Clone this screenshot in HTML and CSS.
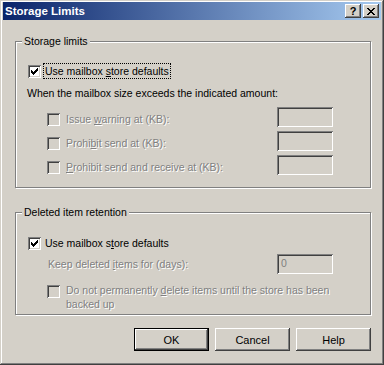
FILE: index.html
```html
<!DOCTYPE html>
<html lang="en">
<head>
    <meta charset="UTF-8">
    <title>Storage Limits</title>
    <link rel="stylesheet" href="styles.css">
</head>
<body>
    <div class="window">
        <div class="titlebar">
            <span class="title">Storage Limits</span>
            <div class="cap-buttons">
                <span class="cap-btn help">?</span>
                <span class="cap-btn">
                    <svg width="8" height="7" viewBox="0 0 8 7" shape-rendering="crispEdges"><path d="M0 0h2v1H0zM6 0h2v1H6zM1 1h2v1H1zM5 1h2v1H5zM2 2h4v1H2zM3 3h2v1H3zM2 4h4v1H2zM1 5h2v1H1zM5 5h2v1H5zM0 6h2v1H0zM6 6h2v1H6z"/></svg>
                </span>
            </div>
        </div>

        <div class="group group-limits">
            <span class="group-title">Storage limits</span>
            <div class="check-row">
                <span class="box">
                    <svg width="7" height="7" viewBox="0 0 7 7" shape-rendering="crispEdges"><path d="M6 0h1v1H6zM5 1h2v1H5zM0 2h1v1H0zM4 2h3v1H4zM0 3h2v1H0zM3 3h3v1H3zM0 4h5v1H0zM1 5h3v1H1zM2 6h1v1H2z"/></svg>
                </span>
                <span class="label focus">Use mailbox <u>s</u>tore defaults</span>
            </div>
            <p class="hint">When the mailbox size exceeds the indicated amount:</p>
            <div class="limit-row">
                <span class="box off"></span>
                <span class="label dim">Issue <u>w</u>arning at (KB):</span>
                <span class="edit"></span>
            </div>
            <div class="limit-row">
                <span class="box off"></span>
                <span class="label dim">Prohi<u>b</u>it send at (KB):</span>
                <span class="edit"></span>
            </div>
            <div class="limit-row">
                <span class="box off"></span>
                <span class="label dim"><u>P</u>rohibit send and receive at (KB):</span>
                <span class="edit"></span>
            </div>
        </div>

        <div class="group group-retention">
            <span class="group-title">Deleted item retention</span>
            <div class="check-row">
                <span class="box">
                    <svg width="7" height="7" viewBox="0 0 7 7" shape-rendering="crispEdges"><path d="M6 0h1v1H6zM5 1h2v1H5zM0 2h1v1H0zM4 2h3v1H4zM0 3h2v1H0zM3 3h3v1H3zM0 4h5v1H0zM1 5h3v1H1zM2 6h1v1H2z"/></svg>
                </span>
                <span class="label plain">Use mailbox s<u>t</u>ore defaults</span>
            </div>
            <div class="keep-row">
                <span class="dim">Keep deleted <u>i</u>tems for (days):</span>
                <span class="edit">0</span>
            </div>
            <div class="wrap-row">
                <span class="box off"></span>
                <span class="label dim">Do not permanently <u>d</u>elete items until the store has been backed up</span>
            </div>
        </div>

        <div class="buttons">
            <button class="btn default">OK</button>
            <button class="btn">Cancel</button>
            <button class="btn">Help</button>
        </div>
    </div>
</body>
</html>
```

FILE: styles.css
```css
/* classic dialog */

* {
    box-sizing: border-box;
}

body {
    margin: 0;
    font-family: "Liberation Sans", Arial, sans-serif;
    font-size: 10.5px;
    line-height: 13px;
    color: #000;
}

.window {
    width: 384px;
    height: 365px;
    padding: 2px 3px 3px;
    background: #d4d0c8;
    box-shadow: inset -1px -1px #404040, inset 1px 1px #d4d0c8,
                inset -2px -2px #808080, inset 2px 2px #fff;
}

.titlebar {
    height: 18px;
    display: flex;
    align-items: center;
    padding: 0 2px;
    background: linear-gradient(to right, #0a246a, #a6caf0);
    color: #fff;
}

.title {
    flex: 1;
    font-weight: bold;
    font-size: 11.5px;
}

.cap-buttons {
    display: flex;
    gap: 2px;
}

.cap-btn {
    width: 16px;
    height: 14px;
    display: flex;
    align-items: center;
    justify-content: center;
    background: #d4d0c8;
    color: #000;
    box-shadow: inset -1px -1px #404040, inset 1px 1px #fff,
                inset -2px -2px #808080, inset 2px 2px #d4d0c8;
}

.cap-btn.help {
    font-weight: bold;
    font-size: 11px;
}

/* group boxes */

.group {
    position: relative;
    width: 356px;
    margin-left: 12px;
    padding: 0 12px;
    border: 1px solid #808080;
    box-shadow: inset 1px 1px #fff, 1px 1px #fff;
}

.group-limits {
    margin-top: 21px;
    padding-bottom: 8px;
}

.group-retention {
    margin-top: 24px;
    padding-bottom: 3px;
}

.group-title {
    position: absolute;
    top: -7px;
    left: 6px;
    padding: 0 2px;
    background: #d4d0c8;
}

.check-row {
    display: flex;
    align-items: center;
    height: 16px;
}

.group-limits .check-row {
    margin-top: 21px;
}

.group-retention .check-row {
    margin-top: 22px;
}

.box {
    flex: none;
    width: 13px;
    height: 13px;
    padding: 3px;
    background: #fff;
    box-shadow: inset 1px 1px #808080, inset -1px -1px #fff,
                inset 2px 2px #404040, inset -2px -2px #d4d0c8;
}

.box svg {
    display: block;
}

.box.off {
    background: #d4d0c8;
}

.label.focus {
    margin-left: 2px;
    padding: 0 1px;
    line-height: 14px;
    border: 1px dotted #000;
}

.label.plain {
    margin-left: 4px;
}

.dim {
    color: #808080;
    text-shadow: 1px 1px 0 #fff;
}

.hint {
    margin: 8px 0 0 -1px;
}

.limit-row {
    display: flex;
    align-items: center;
    height: 24px;
    padding-left: 19px;
}

.hint + .limit-row {
    margin-top: 7px;
}

.limit-row .label {
    margin-left: 6px;
}

.edit {
    align-self: flex-start;
    width: 56px;
    height: 20px;
    margin-left: auto;
    margin-right: 25px;
    padding: 3px 4px;
    background: #d4d0c8;
    color: #808080;
    box-shadow: inset 1px 1px #808080, inset -1px -1px #fff,
                inset 2px 2px #404040, inset -2px -2px #d4d0c8;
}

.keep-row {
    display: flex;
    align-items: center;
    height: 20px;
    margin-top: 3px;
    padding-left: 20px;
}

.keep-row .edit {
    align-self: center;
}

.wrap-row {
    display: flex;
    align-items: flex-start;
    margin-top: 9px;
    padding-left: 19px;
}

.wrap-row .box {
    margin-top: 2px;
}

.wrap-row .label {
    margin-left: 6px;
    line-height: 14px;
}

/* buttons */

.buttons {
    display: flex;
    justify-content: flex-end;
    gap: 6px;
    width: 356px;
    margin: 13px 0 0 12px;
}

.btn {
    width: 75px;
    height: 23px;
    padding: 0;
    border: none;
    background: #d4d0c8;
    font-family: inherit;
    font-size: 11px;
    color: #000;
    box-shadow: inset -1px -1px #404040, inset 1px 1px #fff,
                inset -2px -2px #808080, inset 2px 2px #d4d0c8;
}

.btn.default {
    border: 1px solid #000;
}
```
